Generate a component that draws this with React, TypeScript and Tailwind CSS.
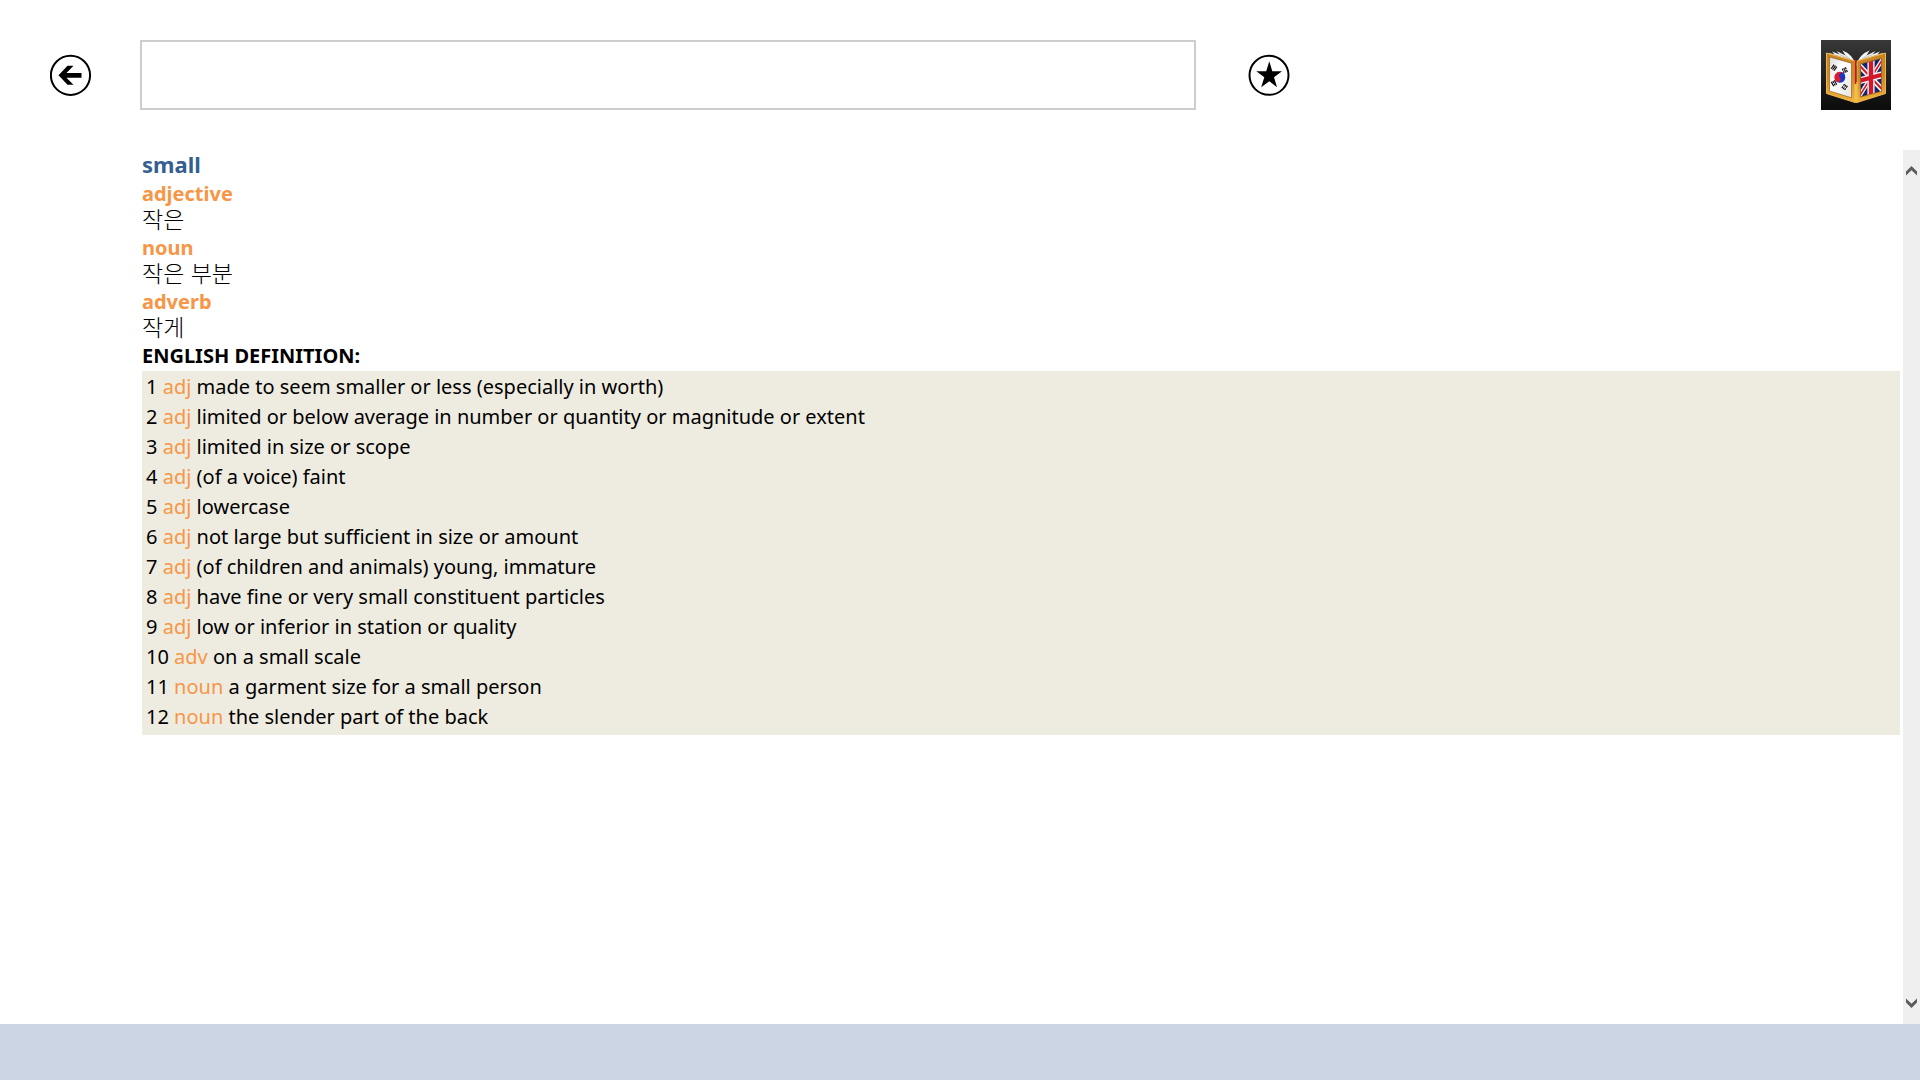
type Entry = { pos: string; translation: string };
type Definition = { pos: string; text: string };

const entries: Entry[] = [
  { pos: 'adjective', translation: '작은' },
  { pos: 'noun', translation: '작은 부분' },
  { pos: 'adverb', translation: '작게' },
];

const definitions: Definition[] = [
  { pos: 'adj', text: 'made to seem smaller or less (especially in worth)' },
  { pos: 'adj', text: 'limited or below average in number or quantity or magnitude or extent' },
  { pos: 'adj', text: 'limited in size or scope' },
  { pos: 'adj', text: '(of a voice) faint' },
  { pos: 'adj', text: 'lowercase' },
  { pos: 'adj', text: 'not large but sufficient in size or amount' },
  { pos: 'adj', text: '(of children and animals) young, immature' },
  { pos: 'adj', text: 'have fine or very small constituent particles' },
  { pos: 'adj', text: 'low or inferior in station or quality' },
  { pos: 'adv', text: 'on a small scale' },
  { pos: 'noun', text: 'a garment size for a small person' },
  { pos: 'noun', text: 'the slender part of the back' },
];

function BackIcon() {
  return (
    <svg viewBox="0 0 42 42" className="size-[42px]" aria-hidden="true">
      <circle cx="20.5" cy="21.3" r="19.6" fill="none" stroke="#000" strokeWidth="2" />
      <path d="M8.500 21.300 17.500 11.800H23.500L16.500 18.900H31.500V23.700H16.500L23.500 30.800H17.500Z" fill="#000" />
    </svg>
  );
}

function StarIcon() {
  return (
    <svg viewBox="0 0 42 42" className="size-[42px]" aria-hidden="true">
      <circle cx="21" cy="21.300" r="19.500" fill="none" stroke="#000" strokeWidth="2" />
      <path d="M21.300 7.300 24.300 17.300H34L26 23.200 29 33.200 21.300 27.200 13.200 33.200 16.300 23.200 8.300 17.300H18.200Z" fill="#000" />
    </svg>
  );
}

function Trigram({ x, y, angle, gaps }: { x: number; y: number; angle: number; gaps: boolean[] }) {
  return (
    <g transform={`translate(${x} ${y}) rotate(${angle})`} stroke="#111" strokeWidth="1.2">
      {gaps.map((gap, i) => (
        <path key={i} d={gap ? 'M-2.500 0H-.4M.4 0H2.500' : 'M-2.500 0H2.500'} transform={`translate(0 ${(i - 1) * 1.7})`} />
      ))}
    </g>
  );
}

function DictionaryLogo() {
  return (
    <svg viewBox="0 0 70 70" className="size-[70px] shrink-0" role="img" aria-label="Korean English dictionary">
      <defs>
        <linearGradient id="tile" x1="0" y1="0" x2="0" y2="1">
          <stop offset="0" stopColor="#383838" />
          <stop offset="1" stopColor="#0b0b0b" />
        </linearGradient>
        <linearGradient id="gold" x1="0" y1="0" x2="0" y2="1">
          <stop offset="0" stopColor="#c98524" />
          <stop offset=".5" stopColor="#cf8a26" />
          <stop offset="1" stopColor="#f2b53a" />
        </linearGradient>
        <linearGradient id="paper" x1="0" y1="0" x2="1" y2="1">
          <stop offset="0" stopColor="#d9d9d9" />
          <stop offset=".4" stopColor="#fff" />
          <stop offset="1" stopColor="#e4e4e4" />
        </linearGradient>
        <clipPath id="flag"><rect width="21" height="33" /></clipPath>
      </defs>
      <rect width="70" height="70" fill="url(#tile)" />
      <path d="M8 13 13.500 14.500 11 11.500 18.500 14.500 15.500 11 24.500 15.500 21.500 10.500Q31 14 34.500 24L34 26 8 18Z" fill="#f4f4f4" />
      <path d="M62 13 56.500 14.500 59 11.500 51.500 14.500 54.500 11 45.500 15.500 48.500 10.500Q39 14 35.500 24L36 26 62 18Z" fill="#f4f4f4" />
      <path d="M13.500 14.500 20 17M18.500 14.500 28 19M24.500 15.500 31 21M56.500 14.500 50 17M51.500 14.500 42 19M45.500 15.500 39 21" stroke="#9a9a9a" strokeWidth=".6" />
      <path d="M5.500 13 34 21V62.500L5.500 53.500Z" fill="url(#gold)" stroke="#eeb652" strokeWidth="1" />
      <path d="M36 21 64.500 13V53.500L36 62.500Z" fill="url(#gold)" stroke="#eeb652" strokeWidth="1" />
      <path d="M33.500 42H36.500V62.500L35 63 33.500 62.500Z" fill="#f3bd4c" />
      <path d="M34.500 19.500V44" stroke="#c4161c" strokeWidth="1.500" />
      <path d="M8.500 17 30.500 23.200V57.800L8.500 51Z" fill="url(#paper)" stroke="#8a5410" strokeWidth=".6" />
      <g transform="rotate(-42 18.800 37.300)">
        <path d="M13.300 37.300A5.500 5.500 0 0 1 24.300 37.300Z" fill="#e01b2b" />
        <path d="M13.300 37.300A5.500 5.500 0 0 0 24.300 37.300Z" fill="#1d35c4" />
        <circle cx="16.050" cy="37.300" r="2.750" fill="#e01b2b" />
        <circle cx="21.550" cy="37.300" r="2.750" fill="#1d35c4" />
      </g>
      <Trigram x={13} y={27.700} angle={-55} gaps={[false, false, false]} />
      <Trigram x={23.800} y={30.300} angle={66} gaps={[true, false, true]} />
      <Trigram x={13} y={43.300} angle={62} gaps={[false, true, false]} />
      <Trigram x={23.600} y={47} angle={-55} gaps={[true, true, true]} />
      <g transform="matrix(1 -.268 0 1 39.500 24)">
        <g clipPath="url(#flag)">
          <rect width="21" height="33" fill="#16246b" />
          <path d="M-2 0 23 33M23 0-2 33" stroke="#f5f5f5" strokeWidth="4.600" />
          <path d="M-2 0 23 33M23 0-2 33" stroke="#d3172b" strokeWidth="1.800" />
          <path d="M10.500 0V33M0 16.500H21" stroke="#f5f5f5" strokeWidth="7.200" />
          <path d="M10.500 0V33M0 16.500H21" stroke="#d3172b" strokeWidth="4.400" />
        </g>
        <rect width="21" height="33" fill="none" stroke="#8a5410" strokeWidth=".6" />
      </g>
    </svg>
  );
}

function Chevron({ up = false }: { up?: boolean }) {
  return (
    <svg viewBox="0 0 11 10" className="h-[10px] w-[11px]" aria-hidden="true">
      <path d={up ? 'M0 5.500 5.500 0 11 5.500V9.500L5.500 4.200 0 9.500Z' : 'M0 4.500 5.500 10 11 4.500V.5L5.500 5.800 0 .5Z'} fill="#5c5c5c" />
    </svg>
  );
}

export default function App() {
  return (
    <div className="flex h-screen flex-col bg-white font-['Noto_Sans','Noto_Sans_CJK_KR',sans-serif] text-[20px] text-black">
      <header className="flex h-[150px] shrink-0 items-center pr-[29px] pl-[50px]">
        <button type="button" aria-label="Back" className="shrink-0">
          <BackIcon />
        </button>
        <input
          type="text"
          aria-label="Search word"
          className="ml-12 h-[70px] w-[55vw] border-2 border-[#cdcdcd] bg-white px-3 outline-none"
        />
        <button type="button" aria-label="Add to favorites" className="ml-[52px] shrink-0">
          <StarIcon />
        </button>
        <div className="ml-auto">
          <DictionaryLogo />
        </div>
      </header>

      <div className="flex min-h-0 flex-1">
        <main className="min-w-0 flex-1 overflow-hidden pr-[3px] pl-[142px]">
          <h1 className="text-[22px] leading-[29px] font-bold text-[#365f91]">small</h1>
          {entries.map((entry) => (
            <section key={entry.pos}>
              <h2 className="leading-[30px] font-bold text-[#f79646]">{entry.pos}</h2>
              <p lang="ko" className="pb-[2px] font-['Liberation_Sans','Noto_Sans_CJK_KR',sans-serif] text-[23px] leading-[22px] font-light">
                {entry.translation}
              </p>
            </section>
          ))}
          <h2 className="leading-[30px] font-bold">ENGLISH DEFINITION:</h2>
          <ol className="bg-[#eeece1] px-1 pt-px pb-[3px]">
            {definitions.map((definition, i) => (
              <li key={definition.text} className="leading-[30px]">
                {i + 1} <span className="text-[#f79646]">{definition.pos}</span> {definition.text}
              </li>
            ))}
          </ol>
        </main>
        <div className="flex w-[17px] shrink-0 flex-col items-center justify-between bg-[#efefef]">
          <button type="button" aria-label="Scroll up" className="flex h-[42px] w-full items-center justify-center">
            <Chevron up />
          </button>
          <button type="button" aria-label="Scroll down" className="flex h-[42px] w-full items-center justify-center">
            <Chevron />
          </button>
        </div>
      </div>

      <footer className="h-14 shrink-0 bg-[#ccd5e4]" />
    </div>
  );
}
